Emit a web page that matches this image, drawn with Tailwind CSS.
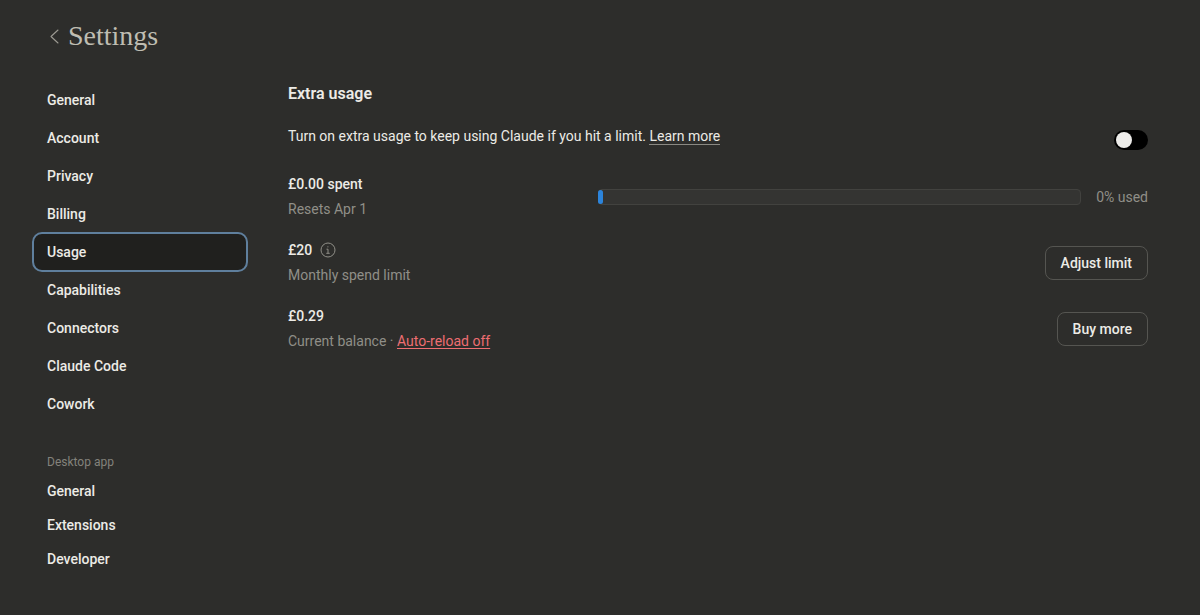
<!DOCTYPE html>
<html lang="en">
<head>
    <meta charset="UTF-8">
    <meta name="viewport" content="width=device-width, initial-scale=1.0">
    <title>Settings</title>
    <script src="https://cdn.jsdelivr.net/npm/@tailwindcss/browser@4"></script>
</head>
<body class="min-h-screen bg-[#2d2d2b] font-['Roboto','Liberation_Sans',sans-serif] text-[14px] leading-5 text-[#ecebe6]">
    <header class="flex items-center gap-2 px-12 pt-5">
        <a href="#" aria-label="Back" class="text-[#9c9a92]">
            <svg class="h-4 w-3" viewBox="0 0 12 16" fill="none" stroke="currentColor" stroke-width="1.1" stroke-linecap="round" stroke-linejoin="round"><path d="M10 2 3 8.500l7 6.500"/></svg>
        </a>
        <h1 class="font-['Liberation_Serif',serif] text-[28px] leading-8 text-[#bfbdb2]">Settings</h1>
    </header>

    <div class="flex gap-10 pl-8 pr-13 pt-7">
        <nav class="w-54 shrink-0 px-0.5 pt-0.5 font-medium">
            <ul class="flex flex-col gap-0.5">
                <li><a href="#" class="flex h-9 items-center rounded-lg px-[13px]">General</a></li>
                <li><a href="#" class="flex h-9 items-center rounded-lg px-[13px]">Account</a></li>
                <li><a href="#" class="flex h-9 items-center rounded-lg px-[13px]">Privacy</a></li>
                <li><a href="#" class="flex h-9 items-center rounded-lg px-[13px]">Billing</a></li>
                <li><a href="#" aria-current="page" class="flex h-9 items-center rounded-lg bg-[#20201e] px-[13px] outline-2 outline-[#5f7f9d]">Usage</a></li>
                <li><a href="#" class="flex h-9 items-center rounded-lg px-[13px]">Capabilities</a></li>
                <li><a href="#" class="flex h-9 items-center rounded-lg px-[13px]">Connectors</a></li>
                <li><a href="#" class="flex h-9 items-center rounded-lg px-[13px]">Claude Code</a></li>
                <li><a href="#" class="flex h-9 items-center rounded-lg px-[13px]">Cowork</a></li>
            </ul>

            <h2 class="mt-8 px-[13px] text-[12px] leading-4 font-normal text-[#83827b]">Desktop app</h2>
            <ul class="mt-1 flex flex-col">
                <li><a href="#" class="flex h-[34px] items-center px-[13px]">General</a></li>
                <li><a href="#" class="flex h-[34px] items-center px-[13px]">Extensions</a></li>
                <li><a href="#" class="flex h-[34px] items-center px-[13px]">Developer</a></li>
            </ul>
        </nav>

        <main class="min-w-0 flex-1">
            <h2 class="pt-0.5 text-[16px] leading-6 font-semibold">Extra usage</h2>

            <div class="mt-5 flex items-center justify-between gap-6">
                <p class="pb-2"><label for="extra-usage">Turn on extra usage to keep using Claude if you hit a limit.</label> <a href="#" class="border-b border-[#8a8983]">Learn more</a></p>
                <input type="checkbox" id="extra-usage" role="switch" class="h-5 w-[34px] shrink-0 appearance-none rounded-full bg-black p-0.5 before:block before:size-4 before:rounded-full before:bg-[#ecebe9] checked:bg-[#2c84db] checked:before:ml-3.5">
            </div>

            <div class="mt-5 flex flex-col gap-[21px]">
                <section class="flex items-center justify-between">
                    <div class="flex flex-col gap-[5px]">
                        <p class="font-medium">£0.00 spent</p>
                        <p class="text-[#908f88]">Resets Apr 1</p>
                    </div>
                    <div class="flex w-16/25 items-center gap-3">
                        <div role="progressbar" aria-label="Extra usage" aria-valuenow="0" aria-valuemin="0" aria-valuemax="100" class="h-4 flex-1 rounded-sm border border-[#42423f] bg-[#343432]">
                            <div class="-ml-px h-full w-[5px] rounded-sm bg-[#2c84db]"></div>
                        </div>
                        <p class="min-w-[55px] text-right text-[#908f88]">0% used</p>
                    </div>
                </section>

                <section class="flex items-center justify-between">
                    <div class="flex flex-col gap-[5px]">
                        <p class="flex items-center gap-2 font-medium">
                            £20
                            <svg class="size-4 text-[#908f88]" viewBox="0 0 16 16" fill="none" stroke="currentColor"><circle cx="8" cy="8" r="7"/><path d="M6.500 7.200H8v4M6.300 11.300h3.400"/><circle cx="7.900" cy="4.800" r=".6" fill="currentColor" stroke="none"/></svg>
                        </p>
                        <p class="text-[#908f88]">Monthly spend limit</p>
                    </div>
                    <button type="button" class="h-[34px] rounded-lg border border-[#555551] px-[15px] font-medium">Adjust limit</button>
                </section>

                <section class="flex items-center justify-between">
                    <div class="flex flex-col gap-[5px]">
                        <p class="font-medium">£0.29</p>
                        <p class="text-[#908f88]">Current balance · <a href="#" class="text-[#ee6e72] underline underline-offset-2">Auto-reload off</a></p>
                    </div>
                    <button type="button" class="h-[34px] rounded-lg border border-[#555551] px-[15px] font-medium">Buy more</button>
                </section>
            </div>
        </main>
    </div>
</body>
</html>
